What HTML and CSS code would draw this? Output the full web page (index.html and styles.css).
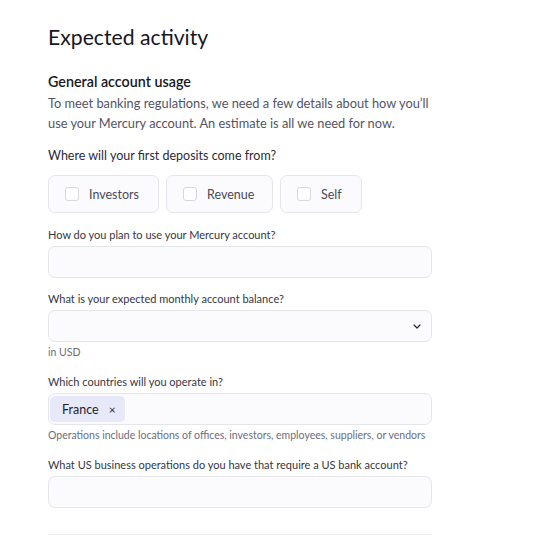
FILE: index.html
```html
<!DOCTYPE html>
<html>
<head>
<meta charset="utf-8">
<link rel="stylesheet" href="styles.css">
</head>
<body>
<main class="page">
  <h1 class="title">Expected activity</h1>
  <h2 class="subtitle">General account usage</h2>
  <p class="intro">To meet banking regulations, we need a few details about how you’ll use your Mercury account. An estimate is all we need for now.</p>

  <div class="question">Where will your first deposits come from?</div>
  <div class="options">
    <label class="option opt-investors"><span class="box"></span><span>Investors</span></label>
    <label class="option opt-revenue"><span class="box"></span><span>Revenue</span></label>
    <label class="option opt-self"><span class="box"></span><span>Self</span></label>
  </div>

  <div class="field">
    <div class="label">How do you plan to use your Mercury account?</div>
    <div class="input"></div>
  </div>

  <div class="field">
    <div class="label">What is your expected monthly account balance?</div>
    <div class="input select">
      <svg class="chevron" width="8" height="5" viewBox="0 0 8 5"><path d="M1 1l3 3 3-3" fill="none" stroke="#2a2a35" stroke-width="1.2" stroke-linecap="round" stroke-linejoin="round"/></svg>
    </div>
    <div class="help">in USD</div>
  </div>

  <div class="field">
    <div class="label">Which countries will you operate in?</div>
    <div class="input tags">
      <span class="chip"><span>France</span><span class="x">×</span></span>
    </div>
    <div class="help">Operations include locations of offices, investors, employees, suppliers, or vendors</div>
  </div>

  <div class="field">
    <div class="label">What US business operations do you have that require a US bank account?</div>
    <div class="input"></div>
  </div>

  <hr class="divider">
</main>
</body>
</html>
```

FILE: styles.css
```css
* { box-sizing: border-box; }
html, body { margin: 0; background: #ffffff; }
body {
  font-family: Lato, "Liberation Sans", sans-serif;
  color: #1e1e2a;
}
.page {
  display: flex;
  flex-direction: column;
  width: 384px;
  margin-left: 48px;
  padding-top: 23px;
}
.title {
  margin: 0;
  font-size: 21.2px;
  line-height: 28px;
  font-weight: 400;
  color: #171721;
}
.subtitle {
  margin: 21px 0 0;
  font-size: 14.3px;
  line-height: 20px;
  font-weight: 600;
  color: #171721;
}
.intro {
  margin: 1px 0 0;
  font-size: 12.8px;
  line-height: 20px;
  color: #535461;
}
.question {
  margin-top: 13px;
  font-size: 12.5px;
  line-height: 20px;
  color: #2b2b38;
}
.options {
  display: flex;
  gap: 7px;
  margin-top: 9px;
  margin-bottom: 2px;
}
.option {
  display: flex;
  align-items: center;
  gap: 10px;
  height: 38px;
  padding: 0 16px;
  background: #fbfbfd;
  border: 1px solid #e5e5ec;
  border-radius: 7px;
  font-size: 12.5px;
  color: #4a4a57;
}
.opt-investors { width: 111px; }
.opt-revenue { width: 107px; }
.opt-self { width: 82px; }
.box {
  flex-shrink: 0;
  width: 14px;
  height: 14px;
  border: 1px solid #d6d6de;
  border-radius: 3px;
  background: #fff;
}
.field {
  display: flex;
  flex-direction: column;
  margin-top: 13px;
}
.options + .field { margin-top: 12px; }
.label {
  font-size: 11px;
  line-height: 16px;
  color: #363644;
  margin-bottom: 3px;
}
.input {
  height: 32px;
  background: #fbfbfd;
  border: 1px solid #e5e5ec;
  border-radius: 7px;
}
.select {
  display: flex;
  align-items: center;
  justify-content: flex-end;
  padding-right: 10px;
}
.tags {
  display: flex;
  align-items: center;
  height: 32px;
  padding-left: 1px;
}
.chip {
  display: inline-flex;
  align-items: center;
  gap: 10px;
  height: 26px;
  padding: 0 9px 0 12px;
  background: #e8e9f8;
  border-radius: 5px;
  font-size: 12.5px;
  color: #1e1e2a;
}
.x { font-size: 12px; color: #2a2a35; }
.help {
  margin: 3px 0 2px;
  font-size: 10.5px;
  line-height: 14px;
  color: #6d6d7a;
}
.divider {
  width: 100%;
  margin: 26px 0 0;
  border: 0;
  border-top: 1px solid #ececf1;
}
```
